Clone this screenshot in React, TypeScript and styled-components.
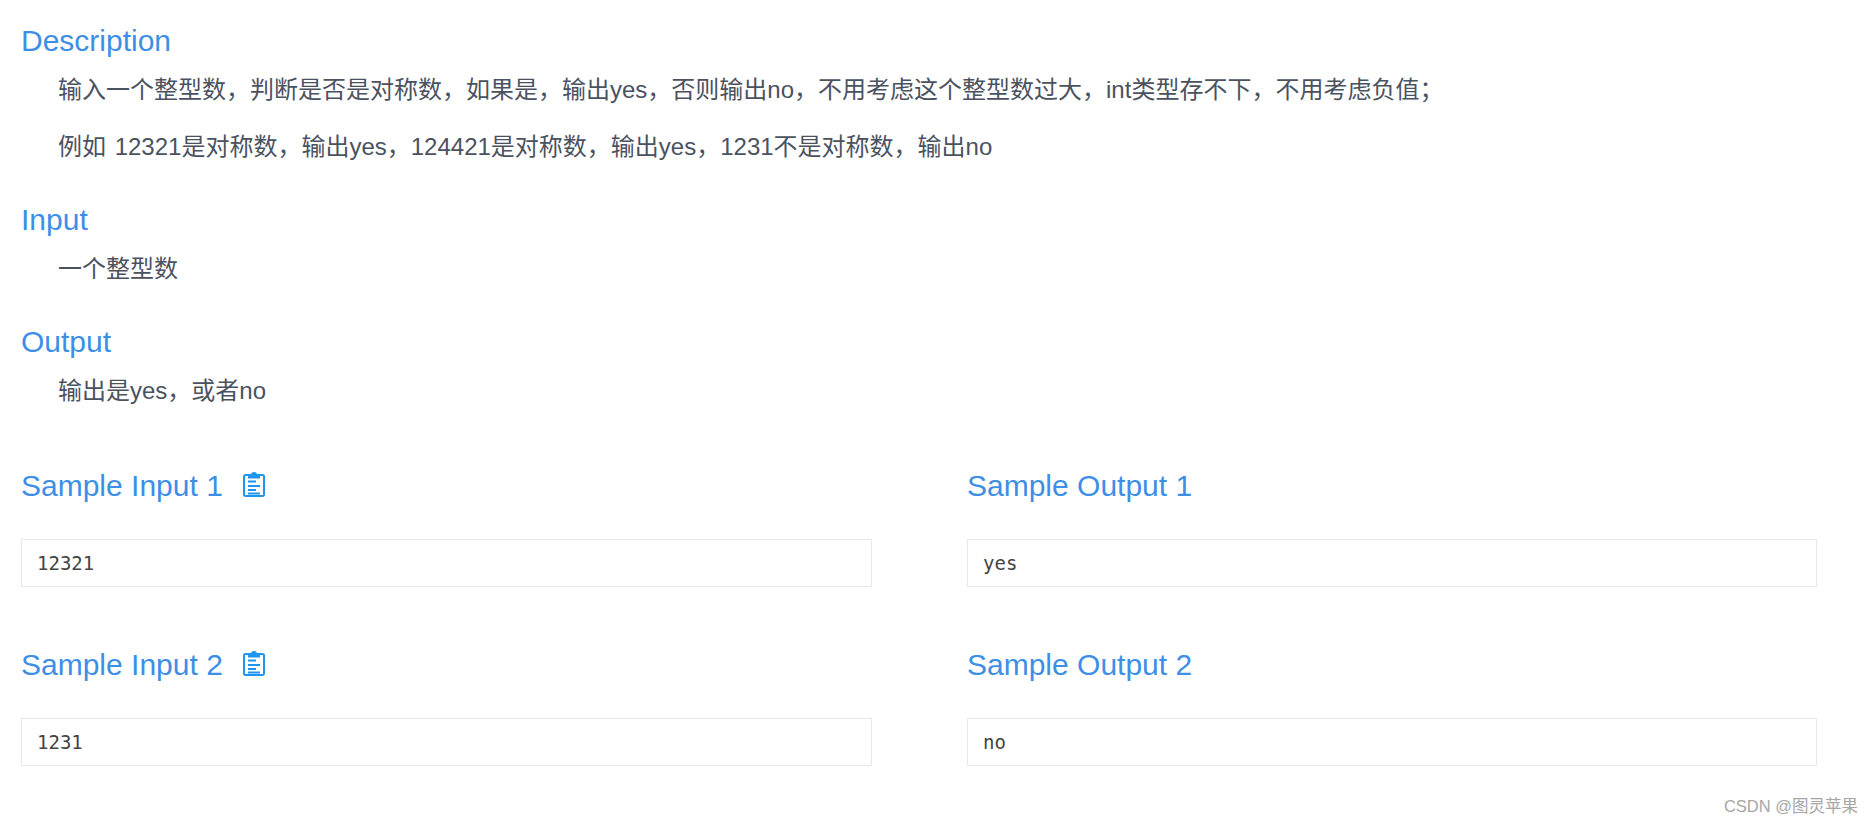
import styled, { createGlobalStyle } from 'styled-components'

const GlobalStyle = createGlobalStyle`
  html, body {
    margin: 0;
    background: #fff;
  }
`

const samples = [
  { id: 1, input: '12321', output: 'yes' },
  { id: 2, input: '1231', output: 'no' },
]

function ClipboardIcon() {
  return (
    <IconSvg width="22" height="26" viewBox="0 0 22 26" fill="none" stroke="#1e96f0" strokeWidth="2">
      <path d="M6 4H2.500A1.500 1.500 0 0 0 1 5.500v18A1.500 1.500 0 0 0 2.500 25h17a1.500 1.500 0 0 0 1.500-1.500v-18A1.500 1.500 0 0 0 19.500 4H16" />
      <path d="M6 6.500V4h3a2 2 0 0 1 4 0h3v2.500z" fill="#1e96f0" />
      <path d="M5 10.500h8M5 15h12M5 19h8M5 22.500h12" />
    </IconSvg>
  )
}

export default function App() {
  return (
    <Page>
      <GlobalStyle />
      <SectionTitle>Description</SectionTitle>
      <Content>
        <p>输入一个整型数，判断是否是对称数，如果是，输出yes，否则输出no，不用考虑这个整型数过大，int类型存不下，不用考虑负值；</p>
        <p>例如 12321是对称数，输出yes，124421是对称数，输出yes，1231不是对称数，输出no</p>
      </Content>
      <SectionTitle>Input</SectionTitle>
      <Content>
        <p>一个整型数</p>
      </Content>
      <SectionTitle>Output</SectionTitle>
      <Content>
        <p>输出是yes，或者no</p>
      </Content>
      <Samples>
        {samples.map((sample) => (
          <SampleRow key={sample.id}>
            <Sample>
              <SampleTitle>
                Sample Input {sample.id}
                <ClipboardIcon />
              </SampleTitle>
              <SampleBox>{sample.input}</SampleBox>
            </Sample>
            <Sample>
              <SampleTitle>Sample Output {sample.id}</SampleTitle>
              <SampleBox>{sample.output}</SampleBox>
            </Sample>
          </SampleRow>
        ))}
      </Samples>
      <Watermark>CSDN @图灵苹果</Watermark>
    </Page>
  )
}

const Page = styled.main`
  position: relative;
  box-sizing: border-box;
  width: 1874px;
  height: 826px;
  padding: 23px 57px 0 21px;
  overflow: hidden;
  font-family: 'Liberation Sans', 'Noto Sans CJK SC', sans-serif;
  color: #4a5260;
`

const SectionTitle = styled.h2`
  margin: 0;
  font-size: 30px;
  line-height: 36px;
  font-weight: 400;
  color: #3d8fe6;
`

const Content = styled.div`
  padding-left: 37px;
  margin: 14px 0 38px;
  font-size: 24px;
  line-height: 34px;
  word-spacing: 2px;

  p {
    margin: 0 0 23px;
  }

  p:last-child {
    margin-bottom: 0;
  }
`

const Samples = styled.div`
  display: flex;
  flex-direction: column;
  gap: 60px;
  margin-top: 60px;
`

const SampleRow = styled.div`
  display: grid;
  grid-template-columns: 851px 850px;
  column-gap: 95px;
`

const Sample = styled.section`
  display: flex;
  flex-direction: column;
  gap: 35px;
`

const SampleTitle = styled.h3`
  display: flex;
  align-items: center;
  gap: 20px;
  margin: 0;
  font-size: 30px;
  line-height: 36px;
  font-weight: 400;
  color: #3d8fe6;
`

const IconSvg = styled.svg`
  margin-bottom: 4px;
`

const SampleBox = styled.pre`
  box-sizing: border-box;
  height: 48px;
  margin: 0;
  padding: 0 15px;
  border: 1px solid #e8e8e8;
  font-family: 'DejaVu Sans Mono', monospace;
  font-size: 19px;
  line-height: 46px;
  color: #444;
`

const Watermark = styled.span`
  position: absolute;
  right: 16px;
  bottom: 9px;
  font-size: 16.5px;
  color: #a6a6a6;
`
